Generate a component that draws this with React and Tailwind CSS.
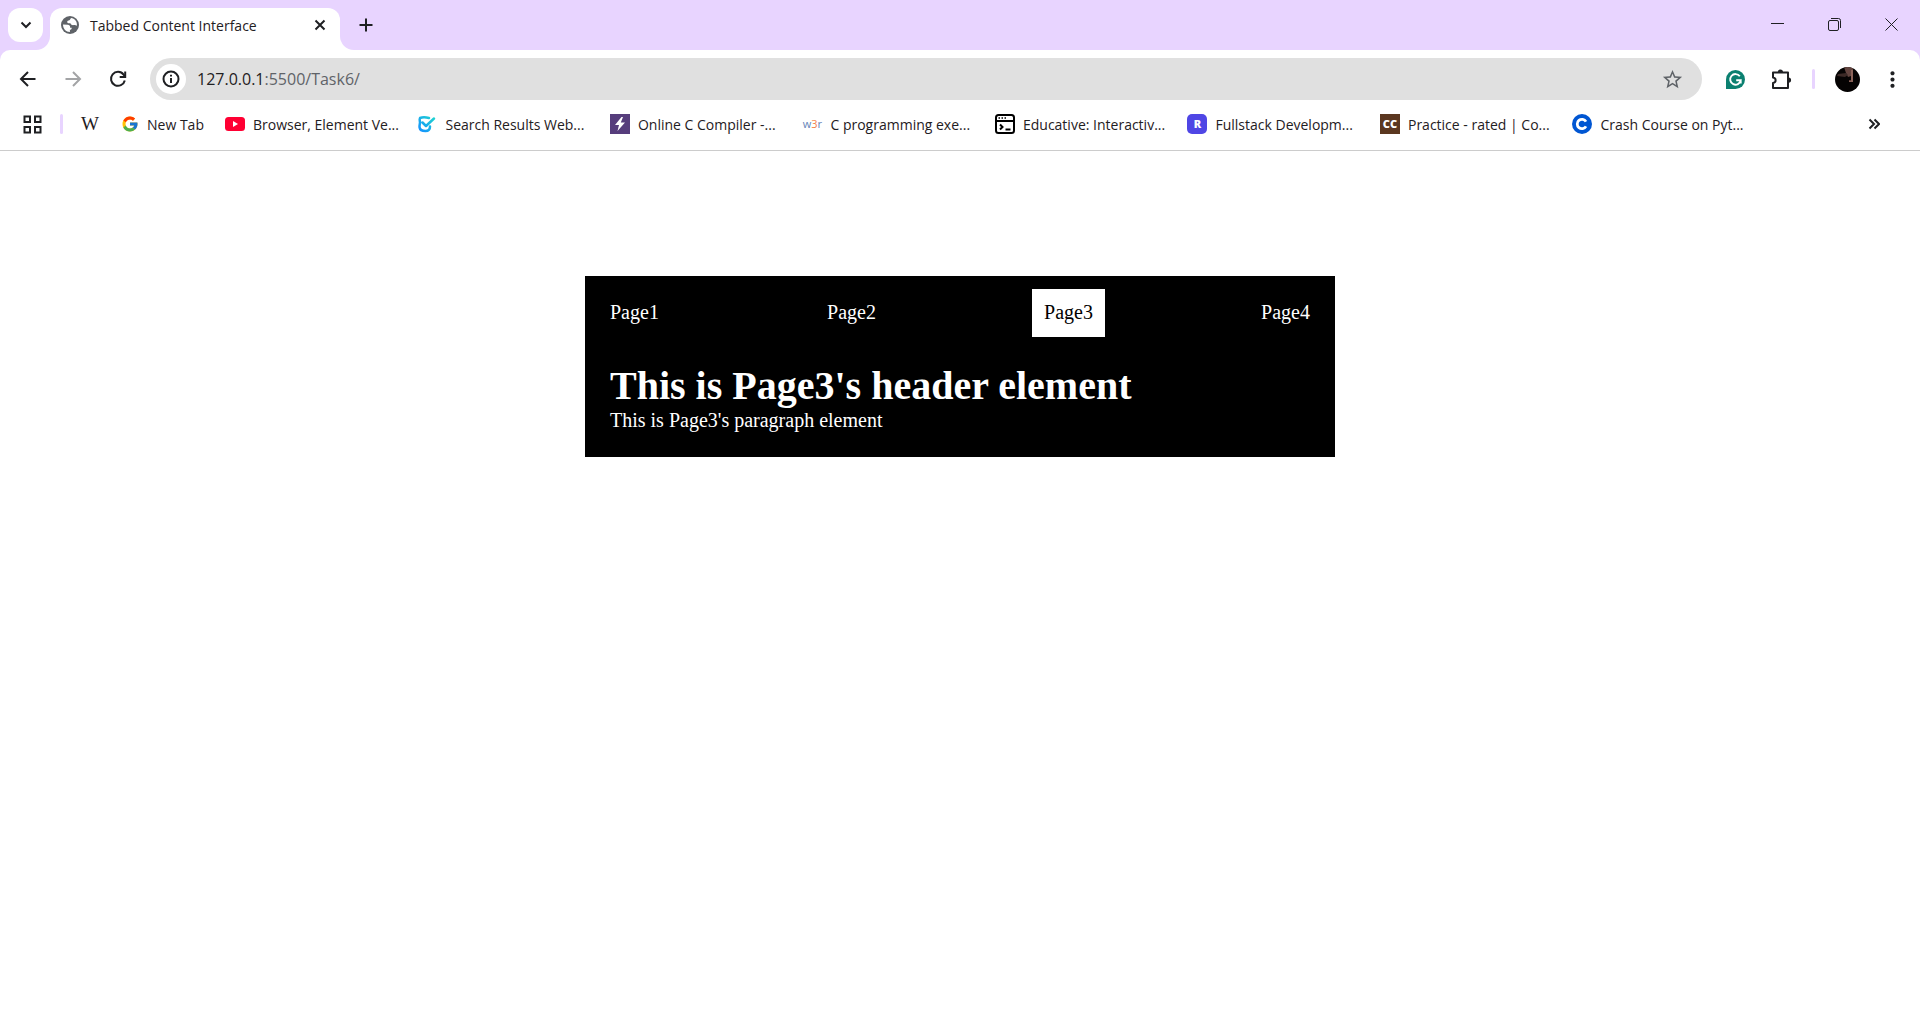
import { useState } from "react";
import { FcGoogle } from "react-icons/fc";
import { MdStarBorder, MdMoreVert } from "react-icons/md";

function Stroke({ children, className = "size-5", width = 2, viewBox = "0 0 20 20" }) {
  return (
    <svg className={className} viewBox={viewBox} fill="none" stroke="currentColor" strokeWidth={width} aria-hidden="true">
      {children}
    </svg>
  );
}

function GlobeIcon() {
  return (
    <svg className="size-[18px] shrink-0" viewBox="0 0 18 18" aria-hidden="true">
      <circle cx="9" cy="9" r="9" fill="#5f6368" />
      <path d="M2 8.400 6.800 8.700c1.500.1 2.300.9 2.300 2.100v.9h1.700c0 1.300-.7 2-1.900 2.100v2.100C5.200 16 2 12.900 2 8.400z" fill="#fff" />
      <path d="M10 2.100c-1.100 1.700-.9 2.300-2.400 2.500-1.200.2-1.600 1-1.300 1.800.5 1 1.700.6 2.700.8 1 .2 1 1.600 2.200 1.900 1.400.3 2.700-.6 4.700.6.5-3.900-2.100-7.200-5.900-7.600z" fill="#fff" />
    </svg>
  );
}

function YouTubeIcon() {
  return (
    <svg className="size-5" viewBox="0 0 20 20" aria-hidden="true">
      <rect y="3" width="20" height="14" rx="3.500" fill="#ff0033" />
      <path d="M8 7v6l5-3z" fill="#fff" />
    </svg>
  );
}

function CheckIcon() {
  return (
    <svg className="size-5" viewBox="0 0 20 20" fill="none" strokeWidth="2.500" strokeLinecap="round" strokeLinejoin="round" aria-hidden="true">
      <defs>
        <linearGradient id="check" x1="0" y1="1" x2="1" y2="0">
          <stop offset="0" stopColor="#1491ff" />
          <stop offset="1" stopColor="#1fd3d0" />
        </linearGradient>
      </defs>
      <path d="M12 4C9 3.200 5 3.200 3 4c-.8 1.500 0 3 0 4.500 0 1.500-.8 3-.4 5C3 16.500 5 17 8.500 17c3 0 4.500-1 4.500-4.500M5.500 8.500 9 12l8-7.500" stroke="url(#check)" />
    </svg>
  );
}

function BoltIcon() {
  return (
    <svg className="size-5" viewBox="0 0 20 20" aria-hidden="true">
      <path d="M0 0h20v20H0z" fill="#563d7c" />
      <path d="M11.500 3 5 11h4l-1.500 6L15 8.500h-4.200L13 3z" fill="#fff" />
    </svg>
  );
}

function TerminalIcon() {
  return (
    <Stroke className="size-5 text-black">
      <rect x="1" y="1" width="18" height="18" rx="2.500" />
      <path d="M1 7h18M5 10.500 7.500 13 5 15.500M10.500 15.500h5" />
      <path d="M3.500 4h1.500M6.500 4H8M9.500 4H11" strokeWidth="1.500" />
    </Stroke>
  );
}

function CourseIcon() {
  return (
    <svg className="size-5" viewBox="0 0 20 20" aria-hidden="true">
      <circle cx="10" cy="10" r="10" fill="#0056d2" />
      <path d="M14 7.600A4.700 4.700 0 1 0 14 12.400" fill="none" stroke="#fff" strokeWidth="2.800" />
    </svg>
  );
}

function LetterBadge({ children, className }) {
  return (
    <span aria-hidden="true" className={"flex size-5 items-center justify-center text-[11px] font-extrabold text-white " + className}>
      {children}
    </span>
  );
}

function W3rIcon() {
  return (
    <span aria-hidden="true" className="flex size-5 items-center justify-center text-[11px] text-[#6484b8]">
      w<span className="text-[#f4824a]">3</span>r
    </span>
  );
}

const BOOKMARKS = [
  { label: "Browser, Element Ve...", icon: <YouTubeIcon /> },
  { label: "Search Results Web...", icon: <CheckIcon /> },
  { label: "Online C Compiler -...", icon: <BoltIcon /> },
  { label: "C programming exe...", icon: <W3rIcon /> },
  { label: "Educative: Interactiv...", icon: <TerminalIcon /> },
  { label: "Fullstack Developm...", icon: <LetterBadge className="rounded-[5px] bg-[#4f46e5]">R</LetterBadge> },
  { label: "Practice - rated | Co...", icon: <LetterBadge className="bg-[#5b3720]">CC</LetterBadge> },
  { label: "Crash Course on Pyt...", icon: <CourseIcon /> },
];

function Bookmark({ icon, label }) {
  return (
    <a href="#" className="flex min-w-0 items-center gap-2 whitespace-nowrap">
      <span className="shrink-0">{icon}</span>
      {label}
    </a>
  );
}

function IconButton({ label, className = "w-10", children }) {
  return (
    <button type="button" aria-label={label} className={"flex h-10 shrink-0 items-center justify-center " + className}>
      {children}
    </button>
  );
}

function TabStrip() {
  return (
    <div className="flex h-[50px] items-end pl-2">
      <button type="button" aria-label="Search tabs" className="relative z-10 mb-2 flex h-[34px] w-[35px] items-center justify-center rounded-xl bg-white">
        <Stroke className="size-3" viewBox="0 0 12 12">
          <path d="M1.500 3.500 6 8l4.500-4.500" />
        </Stroke>
      </button>
      <div className="relative ml-[7px] flex h-[42px] w-[290px] items-center rounded-t-xl bg-white pr-2.5 pb-2 pl-[11px]">
        <span className="absolute bottom-0 -left-3.5 size-3.5 bg-white">
          <span className="block size-full rounded-br-[14px] bg-[#e8d4ff]" />
        </span>
        <span className="absolute -right-3.5 bottom-0 size-3.5 bg-white">
          <span className="block size-full rounded-bl-[14px] bg-[#e8d4ff]" />
        </span>
        <GlobeIcon />
        <span className="ml-[11px] grow text-[14px] whitespace-nowrap">Tabbed Content Interface</span>
        <button type="button" aria-label="Close tab" className="flex size-5 items-center justify-center">
          <Stroke className="size-3" viewBox="0 0 12 12">
            <path d="M1.500 1.500l9 9M10.500 1.500l-9 9" />
          </Stroke>
        </button>
      </div>
      <button type="button" aria-label="New tab" className="mb-[9px] ml-2.5 flex size-8 items-center justify-center">
        <Stroke className="size-3.5" viewBox="0 0 14 14">
          <path d="M7 .5v13M.5 7h13" />
        </Stroke>
      </button>
      <div className="ml-auto flex self-start">
        <IconButton label="Minimize" className="mt-1 w-[57px]">
          <Stroke className="size-[13px]" viewBox="0 0 13 13" width={1}>
            <path d="M0 5.500h13" />
          </Stroke>
        </IconButton>
        <IconButton label="Restore" className="mt-1 w-[57px]">
          <Stroke className="size-[13px]" viewBox="0 0 13 13" width={1}>
            <rect x=".5" y="2.500" width="10" height="10" rx="1.500" />
            <path d="M3 .5h7.500a2 2 0 0 1 2 2V10" />
          </Stroke>
        </IconButton>
        <IconButton label="Close window" className="mt-1 w-[57px]">
          <Stroke className="size-[13px]" viewBox="0 0 13 13" width={1}>
            <path d="M.5.5l12 12M12.500.5l-12 12" />
          </Stroke>
        </IconButton>
      </div>
    </div>
  );
}

function Toolbar() {
  return (
    <div className="flex h-[58px] items-center pr-2 pl-[5px]">
      <IconButton label="Back" className="w-[45px]">
        <Stroke>
          <path d="M17.500 10H3.500M10 3 3 10l7 7" />
        </Stroke>
      </IconButton>
      <IconButton label="Forward" className="w-[45px] text-[#a3a4a6]">
        <Stroke>
          <path d="M2.500 10h14M10 3l7 7-7 7" />
        </Stroke>
      </IconButton>
      <IconButton label="Reload" className="w-[45px]">
        <Stroke>
          <path d="M16.800 11.500A7 7 0 1 1 15.600 5.600L17 7.500" />
          <path d="M17.200 2.500v5.500h-5.500" />
        </Stroke>
      </IconButton>
      <div className="ml-2.5 flex h-[42px] min-w-0 grow items-center rounded-full bg-[#e0e0e0] pr-[18px] pl-1.5">
        <button type="button" aria-label="Site information" className="flex size-[30px] shrink-0 items-center justify-center rounded-full bg-white">
          <Stroke className="size-[18px]" viewBox="0 0 18 18">
            <circle cx="9" cy="9" r="7.500" />
            <path d="M9 8v5M9 4.800v1.800" />
          </Stroke>
        </button>
        <div role="textbox" aria-label="Address" tabIndex={0} className="ml-[11px] grow text-[16px] text-[#5f6368]">
          <span className="text-[#1f2023]">127.0.0.1</span>:5500/Task6/
        </div>
        <button type="button" aria-label="Bookmark this page" className="text-[#5f6368]">
          <MdStarBorder className="size-[23px]" />
        </button>
      </div>
      <IconButton label="Grammar checker" className="ml-[13px] w-10">
        <svg className="size-[19px]" viewBox="0 0 19 19" aria-hidden="true">
          <path d="M0 19V9.500A9.500 9.500 0 1 1 9.500 19z" fill="#0b8070" />
          <path d="M13.800 6.300A5.300 5.300 0 1 0 14.700 10.300H10.200M14.700 9.600v4" fill="none" stroke="#fff" strokeWidth="1.900" />
        </svg>
      </IconButton>
      <IconButton label="Extensions" className="ml-1.5 w-10">
        <svg className="size-[22px]" viewBox="0 0 22 22" aria-hidden="true">
          <path
            d="M3 4.500h15v15.500H3V15c3.500-.5 3.500-5 0-5.500z"
            fill="none"
            stroke="currentColor"
            strokeWidth="2"
            strokeLinejoin="round"
          />
          <path d="M7.800 4a2.600 2.600 0 0 1 5.200 0zM18.500 9.500a2.600 2.600 0 0 1 0 5.200z" fill="currentColor" />
        </svg>
      </IconButton>
      <span className="ml-[11px] h-5 w-[3px] rounded-full bg-[#e8d4ff]" />
      <IconButton label="Profile" className="ml-3 w-10">
        <svg className="size-[25px]" viewBox="0 0 25 25" aria-hidden="true">
          <clipPath id="avatar">
            <circle cx="12.500" cy="12.500" r="12.500" />
          </clipPath>
          <g clipPath="url(#avatar)">
            <path d="M0 0h25v25H0z" fill="#050303" />
            <path d="M9 0h9v15h-4v-2h2V9l-3 1-2-4z" fill="#62443f" />
            <path d="M3 7l8-1 2 2-3 2-8-1z" fill="#3b2926" />
            <path d="M16 3h2v12h-4v-1h2z" fill="#8a6259" />
          </g>
        </svg>
      </IconButton>
      <IconButton label="Menu" className="ml-[5px] w-10">
        <MdMoreVert className="size-[25px]" />
      </IconButton>
    </div>
  );
}

function BookmarksBar() {
  return (
    <nav aria-label="Bookmarks" className="flex h-[43px] items-center border-b border-[#cccccc] pr-9 pb-2.5 pl-[23px] text-[14px]">
      <button type="button" aria-label="Apps" className="shrink-0">
        <Stroke className="size-[19px]" viewBox="0 0 19 19">
          <path d="M1.500 1.500h5.500v5.500H1.500zM12 1.500h5.500v5.500H12zM1.500 12h5.500v5.500H1.500zM12 12h5.500v5.500H12z" />
        </Stroke>
      </button>
      <span className="ml-[18px] h-5 w-[3px] shrink-0 rounded-full bg-[#e8d4ff]" />
      <a href="#" aria-label="Wikipedia" className="ml-[17px] w-5 shrink-0 text-center font-['Liberation_Serif',serif] text-[19px]">
        W
      </a>
      <span className="mr-[21px] ml-[21px] shrink-0">
        <Bookmark icon={<FcGoogle className="size-[18px]" />} label="New Tab" />
      </span>
      <div className="grid max-w-[1540px] grow grid-cols-8">
        {BOOKMARKS.map((b) => (
          <Bookmark key={b.label} {...b} />
        ))}
      </div>
      <button type="button" aria-label="More bookmarks" className="ml-auto flex h-5 w-5 shrink-0 items-center justify-center">
        <Stroke className="size-3" viewBox="0 0 12 12">
          <path d="M1.500 1.500 6 6l-4.500 4.500M6.500 1.500 11 6l-4.500 4.500" />
        </Stroke>
      </button>
    </nav>
  );
}

const PAGES = ["Page1", "Page2", "Page3", "Page4"];

function TabbedContent() {
  const [active, setActive] = useState("Page3");
  return (
    <main className="mx-auto mt-[125px] w-full max-w-[750px] bg-black font-['Liberation_Serif',serif] text-[20px] leading-[23px] text-white">
      <div role="tablist" aria-label="Pages" className="flex justify-between px-[13px] pt-[13px]">
        {PAGES.map((page) => (
          <button
            key={page}
            type="button"
            role="tab"
            id={page}
            aria-selected={page === active}
            aria-controls="page-content"
            onClick={() => setActive(page)}
            className={"px-3 pt-3 pb-[13px] leading-[23px] " + (page === active ? "bg-white text-black" : "")}
          >
            {page}
          </button>
        ))}
      </div>
      <section id="page-content" role="tabpanel" aria-labelledby={active} className="px-[25px] pt-[26px] pb-[25px]">
        <h1 className="text-[40px] leading-[46px] font-bold">This is {active}'s header element</h1>
        <p>This is {active}'s paragraph element</p>
      </section>
    </main>
  );
}

export default function App() {
  return (
    <div className="min-h-screen bg-white font-['Open_Sans','Noto_Sans',sans-serif] text-[#1f2023]">
      <header className="bg-[#e8d4ff]">
        <TabStrip />
        <div className="rounded-t-[10px] bg-white">
          <Toolbar />
          <BookmarksBar />
        </div>
      </header>
      <TabbedContent />
    </div>
  );
}
